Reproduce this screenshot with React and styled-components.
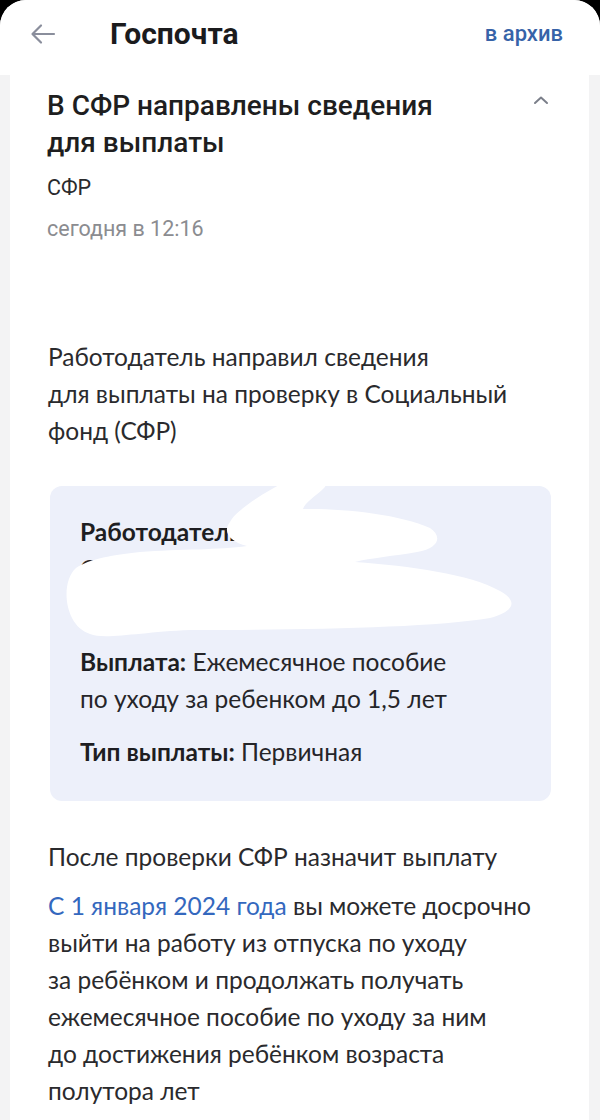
import React from 'react'
import styled, { createGlobalStyle } from 'styled-components'

const GlobalStyle = createGlobalStyle`
    html, body {
        margin: 0;
        padding: 0;
        background: #000;
    }
    * {
        box-sizing: border-box;
    }
`

function App() {
    return (
        <>
            <GlobalStyle />
            <Screen>
                <Header>
                    <BackButton>
                        <svg width="26" height="22" viewBox="0 0 26 22" fill="none">
                            <path d="M24 11H3M11 2.5L2.5 11L11 19.5" stroke="#8a8e9c" strokeWidth="2.2" strokeLinecap="round" strokeLinejoin="round" />
                        </svg>
                    </BackButton>
                    <HeaderTitle>Госпочта</HeaderTitle>
                    <ArchiveLink>в архив</ArchiveLink>
                </Header>
                <Card>
                    <TitleRow>
                        <Title>В СФР направлены сведения для выплаты</Title>
                        <Chevron>
                            <svg width="16" height="10" viewBox="0 0 16 10" fill="none">
                                <path d="M2 8L8 2.5L14 8" stroke="#7b7f8a" strokeWidth="2" strokeLinecap="round" strokeLinejoin="round" />
                            </svg>
                        </Chevron>
                    </TitleRow>
                    <Sender>СФР</Sender>
                    <Date>сегодня в 12:16</Date>

                    <Body>
                        <Paragraph>
                            Работодатель направил сведения<br />
                            для выплаты на проверку в Социальный<br />
                            фонд (СФР)
                        </Paragraph>

                        <InfoBox>
                            <InfoLine>
                                <b>Работодатель:</b> ООО «АБВ»
                            </InfoLine>
                            <InfoLine>СНИЛС 000-000</InfoLine>
                            <InfoLine>ИНН 0000000000</InfoLine>
                            <InfoLine gap="19px">
                                <b>Выплата:</b> Ежемесячное пособие<br />
                                по уходу за ребенком до 1,5 лет
                            </InfoLine>
                            <InfoLine gap="16px">
                                <b>Тип выплаты:</b> Первичная
                            </InfoLine>
                            {/* white marker stroke hiding the employer's data */}
                            <Blot viewBox="0 0 500 160">
                                <path
                                    d="M240 -7 C258 -10, 282 -6, 274 2 C266 10, 255 16, 253 23 C290 22, 350 28, 380 42
                                       C392 50, 390 62, 367 66 C345 70, 320 72, 305 76 C360 80, 420 88, 450 105
                                       C468 115, 465 125, 440 132 C380 142, 250 144, 140 144 C90 146, 55 154, 40 148
                                       C14 140, 10 96, 26 82 C38 74, 55 70, 90 66 C130 63, 170 64, 197 60
                                       C180 56, 172 46, 180 36 C186 24, 215 6, 240 -7 Z"
                                    fill="#fff"
                                />
                            </Blot>
                        </InfoBox>

                        <Paragraph>После проверки СФР назначит выплату</Paragraph>
                        <Paragraph top="12px">
                            <Link>С 1 января 2024 года</Link> вы можете досрочно<br />
                            выйти на работу из отпуска по уходу<br />
                            за ребёнком и продолжать получать<br />
                            ежемесячное пособие по уходу за ним<br />
                            до достижения ребёнком возраста<br />
                            полутора лет
                        </Paragraph>
                    </Body>
                </Card>
            </Screen>
        </>
    )
}

export default App

const Screen = styled.div`
    width: 600px;
    height: 1120px;
    overflow: hidden;
    background: #f3f3f4;
    border-radius: 26px 26px 0 0;
    display: flex;
    flex-direction: column;
`

const Header = styled.div`
    height: 75px;
    flex-shrink: 0;
    background: #fff;
    display: flex;
    align-items: center;
    padding: 0 37px 8px 30px;
`

const BackButton = styled.div`
    width: 80px;
    display: flex;
    align-items: center;
`

const HeaderTitle = styled.div`
    flex: 1;
    font-family: Roboto, "Liberation Sans", sans-serif;
    font-weight: 700;
    font-size: 30px;
    color: #1b1b1d;
`

const ArchiveLink = styled.div`
    font-family: Roboto, "Liberation Sans", sans-serif;
    font-weight: 500;
    font-size: 22px;
    color: #3763a8;
`

const Card = styled.div`
    flex: 1;
    margin: 0 11px 0 10px;
    background: #fff;
    padding: 12px 37px 0 37px;
`

const TitleRow = styled.div`
    display: flex;
    justify-content: space-between;
    align-items: flex-start;
`

const Title = styled.div`
    max-width: 420px;
    font-family: Roboto, "Liberation Sans", sans-serif;
    font-weight: 500;
    font-size: 28px;
    line-height: 37px;
    color: #1e1e20;
`

const Chevron = styled.div`
    padding: 4px 3px 0 0;
`

const Sender = styled.div`
    margin-top: 14px;
    font-family: Roboto, "Liberation Sans", sans-serif;
    font-size: 21.5px;
    line-height: 26px;
    color: #2a2a2c;
`

const Date = styled.div`
    margin-top: 15px;
    font-family: Roboto, "Liberation Sans", sans-serif;
    font-size: 21.5px;
    line-height: 26px;
    color: #8b8c90;
`

const Body = styled.div`
    margin-top: 96px;
    font-family: Lato, "Open Sans", sans-serif;
    font-size: 24.5px;
    line-height: 37px;
    color: #2a2a2d;
`

const Paragraph = styled.p`
    margin: ${p => p.top || '0'} 0 0;
    padding-left: 1px;
`

const Link = styled.span`
    color: #3468be;
`

const InfoBox = styled.div`
    position: relative;
    margin: 37px 1px 37px 3px;
    background: #edf0fa;
    border-radius: 12px;
    padding: 27px 30px 31px;
    color: #252529;

    b {
        font-weight: 700;
        color: #1e1e22;
    }
`

const InfoLine = styled.div`
    margin-top: ${p => p.gap || '0'};
    white-space: nowrap;
`

const Blot = styled.svg`
    position: absolute;
    left: 0;
    top: 0;
    width: 500px;
    height: 160px;
    overflow: visible;
`
